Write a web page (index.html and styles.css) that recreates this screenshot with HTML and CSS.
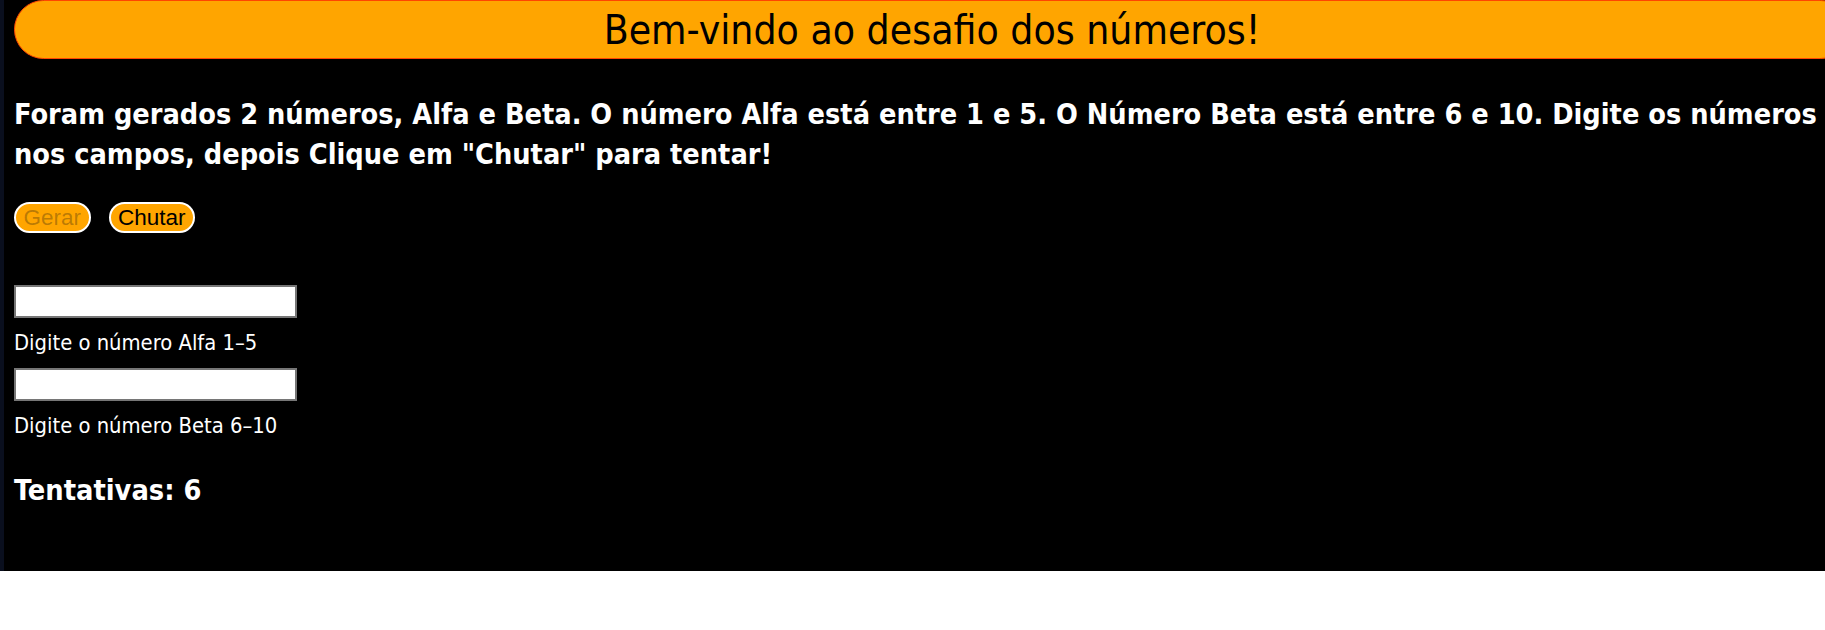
FILE: index.html
```html
<!DOCTYPE html>
<html lang="pt-BR">
<head>
<meta charset="utf-8">
<title>Desafio dos números</title>
<link rel="stylesheet" href="styles.css">
</head>
<body>
<div class="page">
  <header class="banner"><h1 class="banner-title">Bem-vindo ao desafio dos números!</h1></header>
  <p class="intro">Foram gerados 2 números, Alfa e Beta. O número Alfa está entre 1 e 5. O Número Beta está entre 6 e 10. Digite os números nos campos, depois Clique em "Chutar" para tentar!</p>
  <div class="actions">
    <button class="btn" disabled>Gerar</button>
    <button class="btn">Chutar</button>
  </div>
  <div class="fields">
    <input class="field" type="text">
    <label class="field-label">Digite o número Alfa 1–5</label>
    <input class="field" type="text">
    <label class="field-label">Digite o número Beta 6–10</label>
  </div>
  <h2 class="tries">Tentativas: 6</h2>
</div>
</body>
</html>
```
FILE: styles.css
```css
html, body {
  margin: 0;
  padding: 0;
  background: #ffffff;
}
.page {
  background: #000000;
  border-left: 4px solid #0a0f1e;
  padding: 0 0 0 10px;
  height: 571px;
  box-sizing: border-box;
  overflow: hidden;
  font-family: "DejaVu Sans Condensed", "DejaVu Sans", sans-serif;
  color: #ffffff;
}
.banner {
  margin: 0 -25px 0 0;
  height: 59px;
  box-sizing: border-box;
  background: #ffa500;
  border: 1px solid #ff4500;
  border-radius: 30px;
  display: flex;
  align-items: center;
  justify-content: center;
}
.banner-title {
  margin: 0;
  font-weight: normal;
  font-size: 40.5px;
  line-height: 46px;
  color: #000000;
  white-space: nowrap;
}
.intro {
  margin: 35px 0 0 0;
  font-size: 28.6px;
  font-weight: bold;
  line-height: 40px;
}
.actions {
  display: flex;
  gap: 18px;
  margin-top: 28px;
}
.btn {
  font-family: "Liberation Sans", Arial, sans-serif;
  font-size: 22.5px;
  background: #ffa500;
  color: #000000;
  border: 2px solid #ffffff;
  border-radius: 16px;
  padding: 0 7.5px;
  height: 31px;
  line-height: 27px;
}
.btn:disabled {
  color: rgba(16, 16, 16, 0.3);
}
.fields {
  display: flex;
  flex-direction: column;
  align-items: flex-start;
  margin-top: 52px;
}
.field {
  width: 283px;
  height: 33px;
  box-sizing: border-box;
  border: 2px solid #767676;
  background: #ffffff;
  margin: 0;
}
.field-label {
  font-size: 21.8px;
  line-height: 24px;
  margin: 13px 0 13px 0;
}
.tries {
  margin: 22px 0 0 0;
  font-size: 28.7px;
  font-weight: bold;
}
```
